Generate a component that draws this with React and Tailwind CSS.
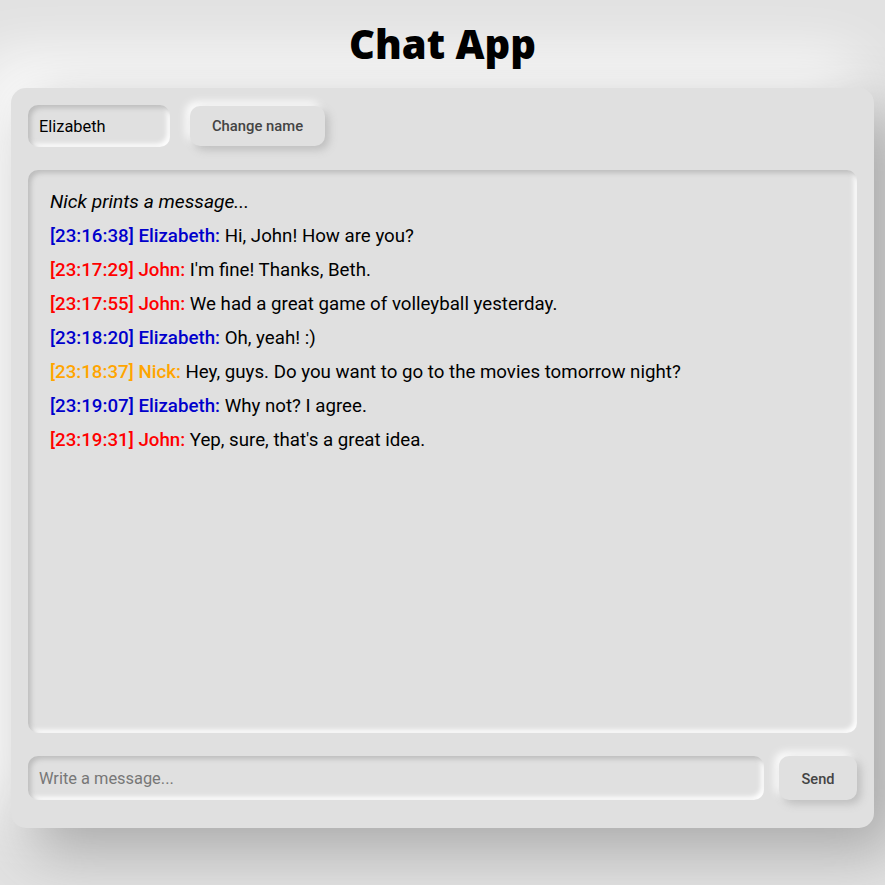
import React, { useState } from 'react'

const messages = [
  { time: '23:16:38', name: 'Elizabeth', text: 'Hi, John! How are you?' },
  { time: '23:17:29', name: 'John', text: "I'm fine! Thanks, Beth." },
  { time: '23:17:55', name: 'John', text: 'We had a great game of volleyball yesterday.' },
  { time: '23:18:20', name: 'Elizabeth', text: 'Oh, yeah! :)' },
  { time: '23:18:37', name: 'Nick', text: 'Hey, guys. Do you want to go to the movies tomorrow night?' },
  { time: '23:19:07', name: 'Elizabeth', text: 'Why not? I agree.' },
  { time: '23:19:31', name: 'John', text: "Yep, sure, that's a great idea." },
]

const nameColor = {
  Elizabeth: 'text-[#0000cc]',
  John: 'text-[#ff0000]',
  Nick: 'text-[#ffa500]',
}

const inset = 'shadow-[inset_3px_3px_5px_#bdbdbd,inset_-3px_-3px_5px_#ffffff]'
const raised = 'shadow-[4px_4px_8px_#bebebe,-4px_-4px_8px_#ffffff]'

const App = () => {
  const [name, setName] = useState('Elizabeth')
  const [draft, setDraft] = useState('')

  return (
    <div className="min-h-screen bg-[#e2e2e2] font-['Roboto',sans-serif] overflow-hidden">
      <h1 className="pt-[19px] h-[88px] text-center text-[40px] leading-[50px] font-extrabold text-black font-['Open_Sans',sans-serif]">
        Chat App
      </h1>

      {/* card */}
      <div className="ml-[11px] w-[863px] h-[740px] rounded-[15px] bg-[#e0e0e0] p-[17px] flex flex-col shadow-[22px_22px_60px_#a6a6a6,-22px_-22px_60px_8px_#ffffff]">
        <div className="flex items-center gap-[20px] h-[42px]">
          <input
            value={name}
            onChange={(e) => setName(e.target.value)}
            className={`w-[142px] h-[42px] rounded-[10px] bg-[#e0e0e0] px-[11px] text-[16.4px] text-black outline-none ${inset}`}
          />
          <button className={`w-[135px] h-[40px] rounded-[10px] bg-[#e0e0e0] text-[14.8px] font-medium text-[#444] ${raised}`}>
            Change name
          </button>
        </div>

        <div className={`mt-[23px] h-[563px] rounded-[10px] bg-[#e0e0e0] px-[22px] pt-[15px] text-[18.7px] leading-[34px] text-black ${inset}`}>
          <p className="italic text-[19.2px]">Nick prints a message...</p>
          {messages.map((m, i) => (
            <p key={i}>
              <span className={`font-medium ${nameColor[m.name]}`}>[{m.time}] {m.name}:</span> {m.text}
            </p>
          ))}
        </div>

        <div className="mt-[23px] flex items-center gap-[15px]">
          <input
            value={draft}
            onChange={(e) => setDraft(e.target.value)}
            placeholder="Write a message..."
            className={`flex-1 h-[44px] rounded-[10px] bg-[#e0e0e0] px-[11px] text-[16.4px] text-black placeholder:text-[#777] outline-none ${inset}`}
          />
          <button className={`w-[78px] h-[44px] pt-[3px] rounded-[10px] bg-[#e0e0e0] text-[14.6px] font-medium text-[#444] ${raised}`}>
            Send
          </button>
        </div>
      </div>
    </div>
  )
}

export default App
